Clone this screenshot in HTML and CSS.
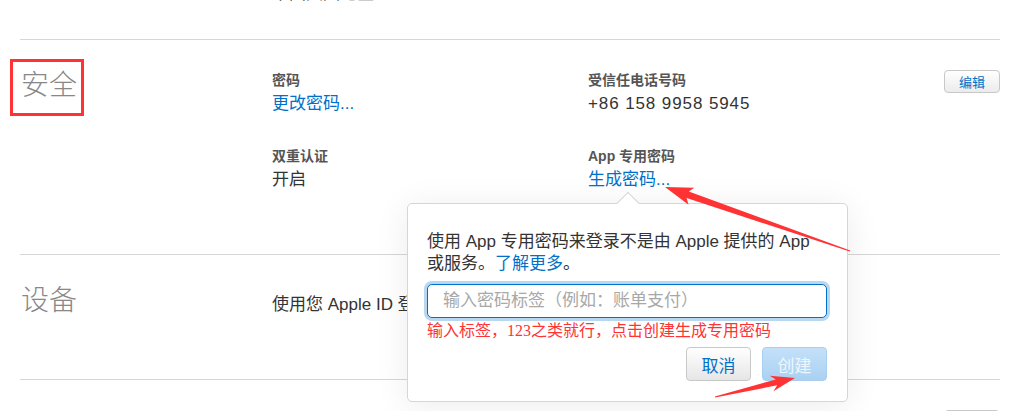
FILE: index.html
```html
<!DOCTYPE html>
<html lang="zh-CN">
<head>
    <meta charset="UTF-8">
    <meta name="viewport" content="width=device-width, initial-scale=1.0">
    <title>Apple ID - 安全</title>
    <link rel="stylesheet" href="styles.css">
</head>
<body>
    <div class="page">
        <div class="section-prev">
            <div class="prev-text">中国大陆地区</div>
        </div>

        <section class="section">
            <h2 class="section-title"><span class="annotated">安全</span></h2>
            <div class="fields">
                <div class="field">
                    <div class="field-label">密码</div>
                    <div class="field-value"><a class="link" href="#">更改密码...</a></div>
                </div>
                <div class="field">
                    <div class="field-label">受信任电话号码</div>
                    <div class="field-value phone">+86 158 9958 5945</div>
                </div>
                <div class="field">
                    <div class="field-label">双重认证</div>
                    <div class="field-value">开启</div>
                </div>
                <div class="field">
                    <div class="field-label">App 专用密码</div>
                    <div class="field-value"><a class="link" href="#">生成密码...</a></div>
                </div>
            </div>
            <button class="btn-edit" type="button">编辑</button>
        </section>

        <section class="section">
            <h2 class="section-title">设备</h2>
            <div class="section-text">使用您 Apple ID 登录的设备如下所示。</div>
        </section>

        <section class="section section-next">
            <div></div>
            <div></div>
            <button class="btn-edit" type="button"></button>
        </section>

        <div class="popover">
            <div class="popover-caret"></div>
            <p class="popover-text">使用 App 专用密码来登录不是由 Apple 提供的 App 或服务。<a class="link" href="#">了解更多</a>。</p>
            <input class="popover-input" type="text" placeholder="输入密码标签（例如：账单支付）">
            <p class="popover-note">输入标签，123之类就行，点击创建生成专用密码</p>
            <div class="popover-actions">
                <button class="btn btn-cancel" type="button">取消</button>
                <button class="btn btn-create" type="button" disabled>创建</button>
            </div>
        </div>
    </div>

    <svg class="annotations" width="1013" height="411" viewBox="0 0 1013 411">
        <polygon points="665,187 694.3,187.7 688.8,191.5 850.2,250.5 849.8,251.5 686.6,198.1 688.5,204.7"/>
        <polygon points="795,378 769.8,375.7 775.8,379.5 714.9,396.5 715.1,397.5 777.2,385.3 773.4,391.3"/>
    </svg>
</body>
</html>
```

FILE: styles.css
```css
body {
    margin: 0;
    height: 411px;
    overflow: hidden;
    position: relative;
    font-family: "Liberation Sans", "Noto Sans CJK SC", sans-serif;
    color: #333;
    background-color: #fff;
}
.page {
    width: 980px;
    margin-left: 20px;
    position: relative;
}
.section-prev {
    height: 40px;
    box-sizing: border-box;
    padding: 0 0 33px 252px;
    display: flex;
    flex-direction: column;
    justify-content: flex-end;
    border-bottom: 1px solid #d6d6d6;
}
.prev-text {
    font-size: 17px;
    line-height: 24px;
}
.section {
    display: grid;
    grid-template-columns: 252px 1fr 56px;
    align-items: start;
    padding: 30px 0 62px;
    border-bottom: 1px solid #d6d6d6;
}
.section-title {
    margin: 0;
    padding-left: 1px;
    font-size: 28px;
    line-height: 32px;
    font-weight: 300;
    color: #888;
}
.annotated {
    display: inline-block;
    border: 3px solid #f33;
    padding: 8px 4px 11px 8px;
    margin: -11px -7px -14px -11px;
}
.fields {
    display: grid;
    grid-template-columns: 316px 1fr;
    row-gap: 30px;
}
.field-label {
    font-size: 14px;
    line-height: 20px;
    font-weight: bold;
    color: #555;
    margin-bottom: 2px;
}
.field-value {
    font-size: 17px;
    line-height: 24px;
}
.phone {
    letter-spacing: 0.9px;
}
.link {
    color: #0070c9;
    text-decoration: none;
}
.section-text {
    margin-top: 8px;
    font-size: 17px;
    line-height: 24px;
}
.btn-edit {
    width: 56px;
    height: 23px;
    padding: 0;
    font-family: inherit;
    font-size: 13px;
    color: #0070c9;
    border: 1px solid #c8c8c8;
    border-radius: 4px;
    background: linear-gradient(#fff, #ebebeb);
}
.section-next {
    min-height: 60px;
}
.popover {
    position: absolute;
    left: 387px;
    top: 203px;
    width: 441px;
    box-sizing: border-box;
    padding: 27px 20px 20px 19px;
    background-color: #fff;
    border: 1px solid #d6d6d6;
    border-radius: 5px;
    box-shadow: 0 4px 34px rgba(0,0,0,0.08);
    z-index: 2;
}
.popover-caret {
    position: absolute;
    left: 212px;
    top: -9px;
    width: 15px;
    height: 15px;
    background-color: #fff;
    border-top: 1px solid #d6d6d6;
    border-left: 1px solid #d6d6d6;
    transform: rotate(45deg);
}
.popover-text {
    margin: 0 0 9px;
    font-size: 17px;
    line-height: 22px;
}
.popover-input {
    display: block;
    width: 400px;
    height: 34px;
    box-sizing: border-box;
    padding: 0 15px;
    font-family: inherit;
    font-size: 17px;
    color: #333;
    border: 1px solid #0070c9;
    border-radius: 5px;
    box-shadow: 0 0 0 3px rgba(0,112,201,0.28);
    outline: none;
}
.popover-input::placeholder {
    color: #a8a8a8;
}
.popover-note {
    margin: 3px 0 0;
    font-family: "Liberation Serif", "Noto Sans CJK SC", serif;
    font-size: 16px;
    line-height: 20px;
    color: #f33;
}
.popover-actions {
    display: flex;
    justify-content: flex-end;
    gap: 11px;
    margin-top: 6px;
}
.btn {
    width: 65px;
    height: 34px;
    padding: 0;
    font-family: inherit;
    font-size: 17px;
    border-radius: 4px;
}
.btn-cancel {
    color: #0070c9;
    border: 1px solid #c8c8c8;
    background: linear-gradient(#fff, #e6e6e6);
}
.btn-create {
    color: #eef6fd;
    border: 1px solid #a9cff0;
    background: linear-gradient(#c4e0f9, #aad1f2);
}
.annotations {
    position: absolute;
    left: 0;
    top: 0;
    z-index: 3;
    pointer-events: none;
}
.annotations polygon {
    fill: #f33;
}
```
